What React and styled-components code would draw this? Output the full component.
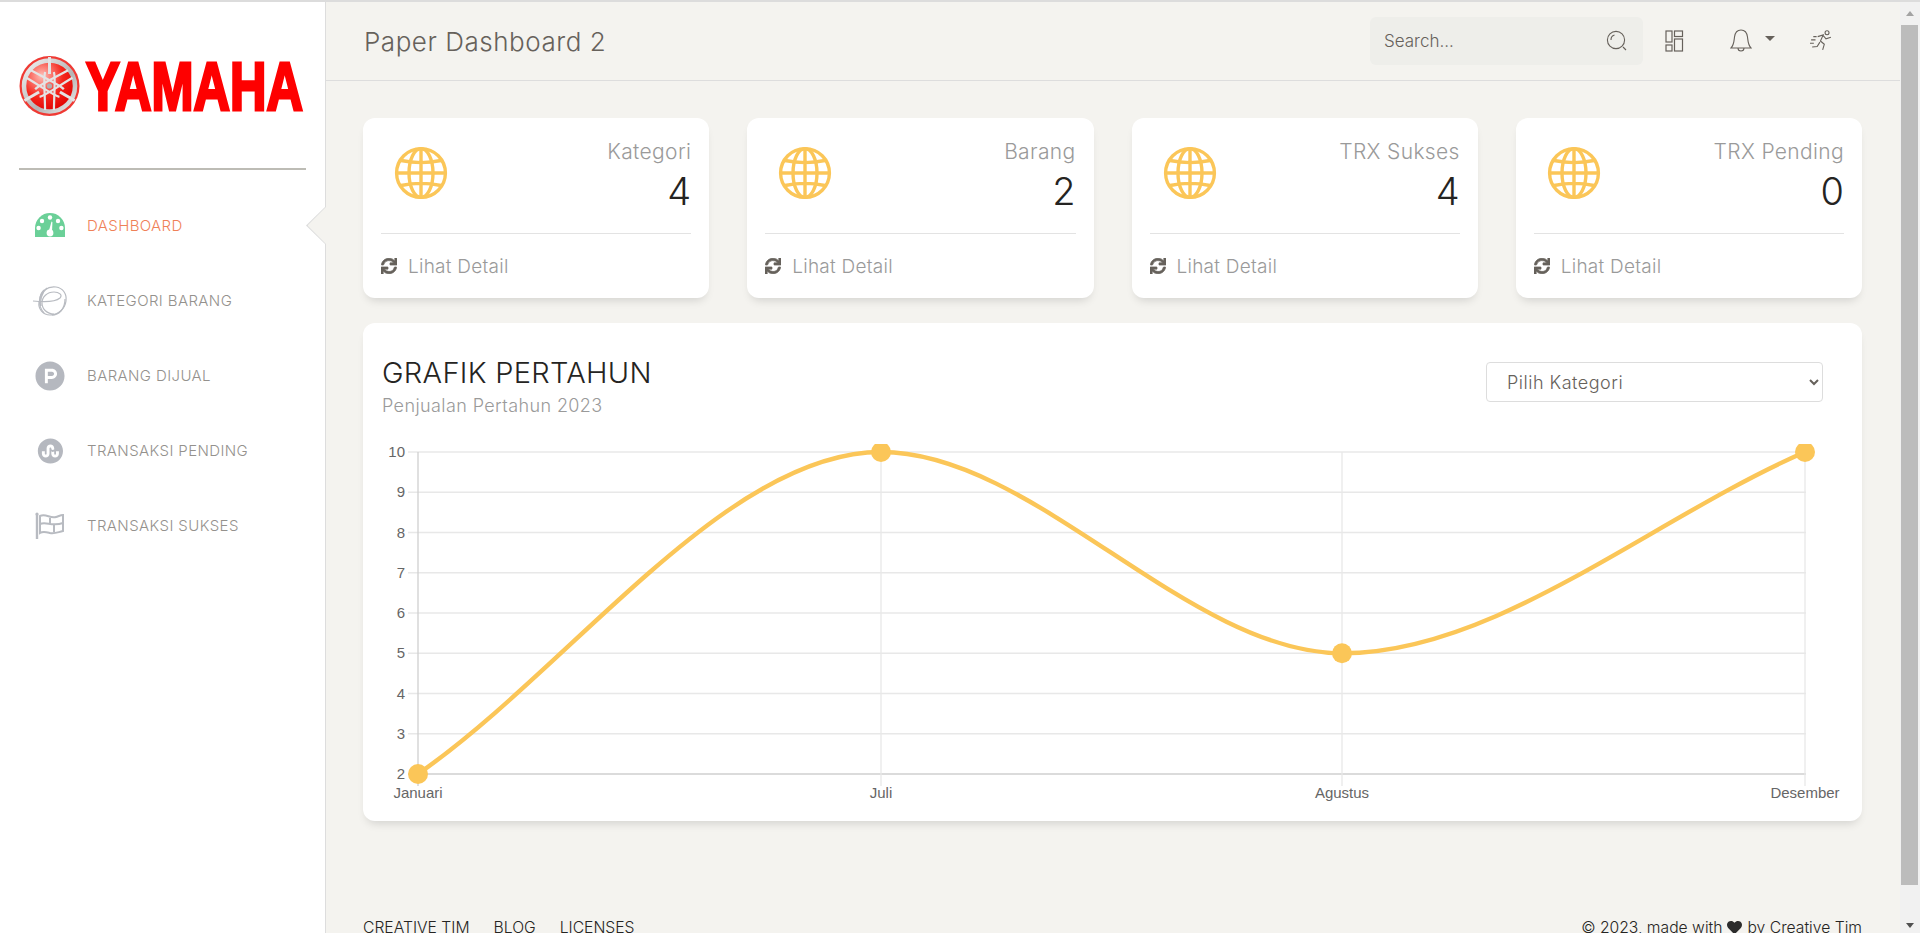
import React from "react";
import styled, { createGlobalStyle } from "styled-components";
import { FaSync, FaHeart, FaProductHunt, FaStumbleuponCircle } from "react-icons/fa";

const GlobalStyle = createGlobalStyle`
    html, body {
        margin: 0;
        height: 100%;
        overflow: hidden;
        background: #f4f3ef;
        font-family: "Inter", "Open Sans", sans-serif;
        color: #66615b;
    }
    * { box-sizing: border-box; }
`;

const menu = [
    { label: "DASHBOARD", icon: <GaugeIcon />, active: true },
    { label: "KATEGORI BARANG", icon: <SwirlIcon /> },
    { label: "BARANG DIJUAL", icon: <FaProductHunt size={30} /> },
    { label: "TRANSAKSI PENDING", icon: <FaStumbleuponCircle size={26} /> },
    { label: "TRANSAKSI SUKSES", icon: <FlagIcon /> },
];

const stats = [
    { title: "Kategori", value: "4" },
    { title: "Barang", value: "2" },
    { title: "TRX Sukses", value: "4" },
    { title: "TRX Pending", value: "0" },
];

// chart coordinates, same origin as the svg viewBox
const yTicks = [10, 9, 8, 7, 6, 5, 4, 3, 2];
const xTicks = [
    { label: "Januari", x: 418 },
    { label: "Juli", x: 881 },
    { label: "Agustus", x: 1342 },
    { label: "Desember", x: 1805 },
];
const tickY = (value) => 452 + (10 - value) * 40.25;
const points = [[418, tickY(2)], [881, tickY(10)], [1342, tickY(5)], [1805, tickY(10)]];

function GaugeIcon() {
    return (
        <svg width="30" height="26" viewBox="0 0 30 26">
            <path d="M0 24 V15 A15 15 0 0 1 30 15 V24 Z" fill="#6bd098" />
            <g fill="#fff">
                <circle cx="15" cy="4.5" r="2.2" />
                <circle cx="7" cy="8" r="2.2" />
                <circle cx="23" cy="8" r="2.2" />
                <circle cx="3.6" cy="15" r="2.2" />
                <circle cx="26.4" cy="15" r="2.2" />
                <circle cx="15" cy="20" r="3.4" />
                <path d="M13.6 19 L16.5 8.5 L17.4 9 L17 19.5 Z" />
            </g>
        </svg>
    );
}

function SwirlIcon() {
    return (
        <svg width="36" height="32" viewBox="0 0 36 32" fill="none" stroke="#b8bbc1" strokeWidth="1.2">
            <path d="M8 15 C8 6 16 1 24 2 C31 3 35 9 34 16 C33 24 26 30 18 30 C11 30 6 24 7 17" />
            <path d="M1 16 C10 17 22 18 28 13 C31 10 27 7 22 7 C15 7 10 12 10 18 C10 24 15 29 22 29" />
            <path d="M12 5 C7 10 5 20 12 28 M15 3 C9 8 8 16 9 21 M20 30 C27 30 33 24 33 14" />
        </svg>
    );
}

function FlagIcon() {
    return (
        <svg width="32" height="28" viewBox="0 0 32 28" fill="none" stroke="#b8bbc1">
            <path d="M3 2 V27" strokeWidth="2.4" />
            <circle cx="3" cy="2" r="1.6" fill="#b8bbc1" stroke="none" />
            <path d="M6 4 C12 1 16 7 22 5 C25 4 27 3 29 3 V19 C24 20 21 22 16 21 C12 20 9 19 6 21 Z" strokeWidth="2" />
            <path d="M6 12 C12 9 18 15 29 11 M16 6 V12 M20 13 V20" strokeWidth="2" />
        </svg>
    );
}

function Logo() {
    return (
        <svg width="325" height="130" viewBox="0 0 325 130">
            <defs>
                <radialGradient id="emblemRed" cx="35%" cy="30%" r="75%">
                    <stop offset="0%" stopColor="#ffc0b8" />
                    <stop offset="55%" stopColor="#f5271d" />
                    <stop offset="100%" stopColor="#e00000" />
                </radialGradient>
                <linearGradient id="emblemRing" x1="0" y1="0" x2="1" y2="1">
                    <stop offset="0%" stopColor="#f2f2f2" />
                    <stop offset="60%" stopColor="#b4b4b4" />
                    <stop offset="100%" stopColor="#ececec" />
                </linearGradient>
            </defs>
            <g transform="translate(49.5 84)">
                <circle r="30" fill="#ef3a34" />
                <circle r="25.5" fill="url(#emblemRed)" stroke="url(#emblemRing)" strokeWidth="4.5" />
                {[0, 120, 240].map((angle) => (
                    <g key={angle} transform={`rotate(${angle})`} stroke="#e4e4e4" fill="none">
                        <path d="M0 -29 L0 -12" strokeWidth="3" />
                        <path d="M-4.4 -14 C-6 -9 -5 -2 -4.4 24 M4.4 -14 C6 -9 5 -2 4.4 24" strokeWidth="2.2" />
                    </g>
                ))}
                <circle r="2.6" fill="#b0b0b0" />
            </g>
            <text
                x="86"
                y="108"
                fontFamily="Liberation Sans"
                fontWeight="700"
                fontSize="68"
                fill="#fe0000"
                stroke="#fe0000"
                strokeWidth="3"
                textLength="217"
                lengthAdjust="spacingAndGlyphs"
            >
                YAMAHA
            </text>
        </svg>
    );
}

function GlobeIcon() {
    return (
        <svg width="54" height="54" viewBox="0 0 54 54" fill="none" stroke="#fbc658" strokeWidth="3.4">
            <circle cx="27" cy="27" r="24.4" />
            <ellipse cx="27" cy="27" rx="12" ry="24.4" />
            <path d="M27 3 V51 M3 27 H51 M7 14.5 C19 17 35 17 47 14.5 M7 39.5 C19 37 35 37 47 39.5" />
        </svg>
    );
}

function SearchIcon() {
    return (
        <svg width="22" height="22" viewBox="0 0 22 22" fill="none" stroke="#66615b" strokeWidth="1.1">
            <circle cx="10" cy="10" r="8.6" />
            <path d="M5 10 A5 5 0 0 1 8.5 5 M17 17 L20 20" />
        </svg>
    );
}

function LayoutIcon() {
    return (
        <svg width="19" height="22" viewBox="0 0 19 22" fill="none" stroke="#66615b" strokeWidth="1.2">
            <rect x="1" y="1" width="6" height="11" />
            <rect x="9.5" y="1" width="8" height="5.5" />
            <rect x="1" y="15" width="6" height="6" />
            <rect x="9.5" y="9" width="8" height="12" />
        </svg>
    );
}

function BellIcon() {
    return (
        <svg width="22" height="24" viewBox="0 0 22 24" fill="none" stroke="#66615b" strokeWidth="1.1">
            <path d="M1 19 C4 16 4 12 4.5 8 C5 4 7.5 1 11 1 C14.5 1 17 4 17.5 8 C18 12 18 16 21 19 Z" />
            <path d="M8 19 C8 23 14 23 14 19" />
        </svg>
    );
}

function RunnerIcon() {
    return (
        <svg width="22" height="22" viewBox="0 0 20 20" fill="none" stroke="#66615b" strokeWidth="1">
            <circle cx="15.5" cy="2.5" r="1.8" />
            <path d="M7 6 L12 4.5 L9.5 10 L13 13 L11.5 18 M12 5 L14.5 8 L19 6.5 M9 11 L6.5 15 L2 15.5 M1 9 H5 M0 12 H3.5 M3 6 H6" />
        </svg>
    );
}

function YearChart() {
    const [p0, p1, p2, p3] = points;
    // monotone curve: flat at Juli and Agustus, secant slope at both ends
    const line = `M${p0[0]} ${p0[1]} C572 666.7 726 ${p1[1]} ${p1[0]} ${p1[1]} C1034 ${p1[1]} 1188 ${p2[1]} ${p2[0]} ${p2[1]} C1496 ${p2[1]} 1651 519 ${p3[0]} ${p3[1]}`;
    return (
        <ChartSvg viewBox="378 444 1470 360">
            {yTicks.map((value) => (
                <g key={value}>
                    <line
                        x1="408"
                        x2="1806"
                        y1={tickY(value)}
                        y2={tickY(value)}
                        stroke={value === 2 ? "#cfcfcf" : "#e8e8e8"}
                        strokeWidth="1.3"
                    />
                    <ChartLabel x="405" y={tickY(value) + 5} textAnchor="end">{value}</ChartLabel>
                </g>
            ))}
            {xTicks.map((tick, i) => (
                <g key={tick.label}>
                    <line
                        x1={tick.x}
                        x2={tick.x}
                        y1="452"
                        y2="786"
                        stroke={i === 0 ? "#cfcfcf" : "#e8e8e8"}
                        strokeWidth="1.3"
                    />
                    <ChartLabel x={tick.x} y="798" textAnchor="middle">{tick.label}</ChartLabel>
                </g>
            ))}
            <path d={line} fill="none" stroke="#fbc658" strokeWidth="4.4" />
            {points.map(([x, y]) => (
                <circle key={x} cx={x} cy={y} r="10" fill="#fbc658" />
            ))}
        </ChartSvg>
    );
}

export default function App() {
    return (
        <>
            <GlobalStyle />
            <Page>
                <Sidebar>
                    <LogoBox><Logo /></LogoBox>
                    <Divider />
                    <Menu>
                        {menu.map((item) => (
                            <MenuItem key={item.label} $active={item.active}>
                                <MenuIcon>{item.icon}</MenuIcon>
                                {item.label}
                                {item.active && <ActiveArrow />}
                            </MenuItem>
                        ))}
                    </Menu>
                </Sidebar>

                <Main>
                    <Navbar>
                        <Brand>Paper Dashboard 2</Brand>
                        <NavRight>
                            <SearchBox>
                                Search...
                                <SearchIcon />
                            </SearchBox>
                            <NavIcon $left={22}><LayoutIcon /></NavIcon>
                            <NavIcon $left={46}><BellIcon /><Caret /></NavIcon>
                            <NavIcon $left={35}><RunnerIcon /></NavIcon>
                        </NavRight>
                    </Navbar>

                    <Content>
                        <StatsGrid>
                            {stats.map((stat) => (
                                <StatCard key={stat.title}>
                                    <StatBody>
                                        <GlobeIcon />
                                        <StatText>
                                            <StatTitle>{stat.title}</StatTitle>
                                            <StatValue>{stat.value}</StatValue>
                                        </StatText>
                                    </StatBody>
                                    <StatFooter>
                                        <FaSync size={16} color="#66615b" stroke="#66615b" strokeWidth={24} />
                                        Lihat Detail
                                    </StatFooter>
                                </StatCard>
                            ))}
                        </StatsGrid>

                        <ChartCard>
                            <ChartHeader>
                                <div>
                                    <ChartTitle>GRAFIK PERTAHUN</ChartTitle>
                                    <ChartSub>Penjualan Pertahun 2023</ChartSub>
                                </div>
                                <CategorySelect defaultValue="">
                                    <option value="">Pilih Kategori</option>
                                </CategorySelect>
                            </ChartHeader>
                            <YearChart />
                        </ChartCard>

                        <Footer>
                            <FooterLinks>
                                <span>CREATIVE TIM</span>
                                <span>BLOG</span>
                                <span>LICENSES</span>
                            </FooterLinks>
                            <Credits>
                                © 2023, made with <FaHeart size={15} color="#2c2c2c" /> by Creative Tim
                            </Credits>
                        </Footer>
                    </Content>
                </Main>

                <ScrollBar>
                    <ScrollArrow $up />
                    <ScrollThumb />
                    <ScrollArrow />
                </ScrollBar>
            </Page>
        </>
    );
}

const Page = styled.div`
    display: flex;
    height: 933px;
    overflow: hidden;
    border-top: 2px solid #dcdcdc;
`;

const Sidebar = styled.aside`
    position: relative;
    flex: 0 0 325px;
    background: #fff;
    border-right: 1px solid #dddddd;
`;

const LogoBox = styled.div`
    height: 166px;

    svg { display: block; }
`;

const Divider = styled.hr`
    margin: 0 19px;
    border: 0;
    height: 2px;
    background: #bdbcb5;
`;

const Menu = styled.nav`
    padding-top: 18px;
`;

const MenuItem = styled.div`
    position: relative;
    display: flex;
    align-items: center;
    height: 75px;
    font-size: 15px;
    font-weight: 300;
    letter-spacing: 0.4px;
    color: ${(p) => (p.$active ? "#ef8157" : "#94918d")};
`;

const MenuIcon = styled.span`
    flex: 0 0 87px;
    display: flex;
    justify-content: center;
    padding-left: 13px;
    color: #b5b8bf;
`;

const ActiveArrow = styled.i`
    position: absolute;
    right: -1px;
    top: 18px;
    width: 20px;
    height: 39px;
    background: #dddddd;
    clip-path: polygon(100% 0, 0 50%, 100% 100%);

    &::after {
        content: "";
        position: absolute;
        inset: 1px 0 1px 1.5px;
        background: #f4f3ef;
        clip-path: polygon(100% 0, 0 50%, 100% 100%);
    }
`;

const Main = styled.main`
    flex: 1;
    min-width: 0;
`;

const Navbar = styled.header`
    display: flex;
    align-items: center;
    justify-content: space-between;
    height: 79px;
    padding: 0 0 0 38px;
    border-bottom: 1px solid #dddddd;
`;

const Brand = styled.div`
    font-size: 26px;
    font-weight: 300;
    color: #66615b;
    letter-spacing: 0.53px;
`;

const NavRight = styled.div`
    display: flex;
    align-items: center;
    padding-right: 68px;
`;

const SearchBox = styled.div`
    display: flex;
    align-items: center;
    justify-content: space-between;
    width: 273px;
    height: 48px;
    padding: 0 15px 0 14px;
    background: #eeeeea;
    border-radius: 6px;
    font-size: 17px;
    font-weight: 300;
`;

const NavIcon = styled.div`
    position: relative;
    display: flex;
    align-items: center;
    margin-left: ${(p) => p.$left}px;
`;

const Caret = styled.i`
    margin: -6px 0 0 13px;
    border-top: 5px solid #66615b;
    border-left: 5px solid transparent;
    border-right: 5px solid transparent;
`;

const Content = styled.div`
    padding: 37px 38px 0 37px;
`;

const StatsGrid = styled.div`
    display: grid;
    grid-template-columns: repeat(4, 1fr);
    gap: 38px;
`;

const StatCard = styled.section`
    height: 180px;
    padding: 0 18px;
    background: #fff;
    border-radius: 12px;
    box-shadow: 0 6px 10px -4px rgba(0, 0, 0, 0.15);
`;

const StatBody = styled.div`
    display: flex;
    justify-content: space-between;
    height: 116px;
    padding-top: 28px;
    border-bottom: 1px solid #e3e3e3;

    svg { margin-left: 13px; }
`;

const StatText = styled.div`
    text-align: right;
`;

const StatTitle = styled.div`
    font-size: 21px;
    font-weight: 300;
    line-height: 24px;
    letter-spacing: 0.35px;
    margin-top: -6px;
    color: #9a9a9a;
`;

const StatValue = styled.div`
    font-size: 38px;
    font-weight: 300;
    line-height: 42px;
    margin-top: 6px;
    color: #252422;
`;

const StatFooter = styled.div`
    display: flex;
    align-items: center;
    gap: 11px;
    height: 64px;
    font-size: 19px;
    font-weight: 300;
    letter-spacing: 0.25px;
    color: #9a9a9a;
`;

const ChartCard = styled.section`
    height: 498px;
    margin-top: 25px;
    background: #fff;
    border-radius: 12px;
    box-shadow: 0 6px 10px -4px rgba(0, 0, 0, 0.15);
`;

const ChartHeader = styled.div`
    display: flex;
    justify-content: space-between;
    height: 121px;
    padding: 33px 39px 0 19px;
`;

const ChartTitle = styled.h2`
    margin: 0;
    font-size: 29px;
    font-weight: 300;
    line-height: 34px;
    letter-spacing: 0.3px;
    color: #252422;
`;

const ChartSub = styled.p`
    margin: 5px 0 0;
    font-size: 18px;
    font-weight: 300;
    line-height: 22px;
    letter-spacing: 0.4px;
    color: #9a9a9a;
`;

const CategorySelect = styled.select`
    width: 337px;
    height: 40px;
    margin-top: 6px;
    padding-left: 16px;
    border: 1px solid #dddddd;
    border-radius: 4px;
    background: #fff;
    font-family: inherit;
    font-size: 18px;
    font-weight: 300;
    letter-spacing: 0.5px;
    color: #66615b;
`;

const ChartSvg = styled.svg`
    display: block;
    width: 1470px;
    height: 360px;
    margin-left: 15px;
`;

const ChartLabel = styled.text`
    font-family: "Liberation Sans", sans-serif;
    font-size: 15px;
    fill: #666666;
`;

const Footer = styled.footer`
    display: flex;
    justify-content: space-between;
    margin-top: 97px;
    font-size: 15.7px;
    font-weight: 300;
    color: #252422;
`;

const FooterLinks = styled.div`
    display: flex;
    gap: 24px;
`;

const Credits = styled.div`
    display: flex;
    align-items: center;
    gap: 5px;
`;

const ScrollBar = styled.div`
    flex: 0 0 20px;
    display: flex;
    flex-direction: column;
    padding: 0 2px 0 1px;
    background: #f1f1f1;
`;

const ScrollArrow = styled.div`
    flex: 0 0 ${(p) => (p.$up ? 23 : 48)}px;
    display: flex;
    justify-content: center;
    align-items: ${(p) => (p.$up ? "center" : "flex-end")};
    padding-bottom: ${(p) => (p.$up ? 0 : 5)}px;

    &::before {
        content: "";
        border-left: 4.5px solid transparent;
        border-right: 4.5px solid transparent;
        ${(p) => (p.$up ? "border-bottom: 5px solid #a3a3a3;" : "border-top: 5px solid #505050;")}
    }
`;

const ScrollThumb = styled.div`
    flex: 1;
    background: #bcbcbc;
`;
